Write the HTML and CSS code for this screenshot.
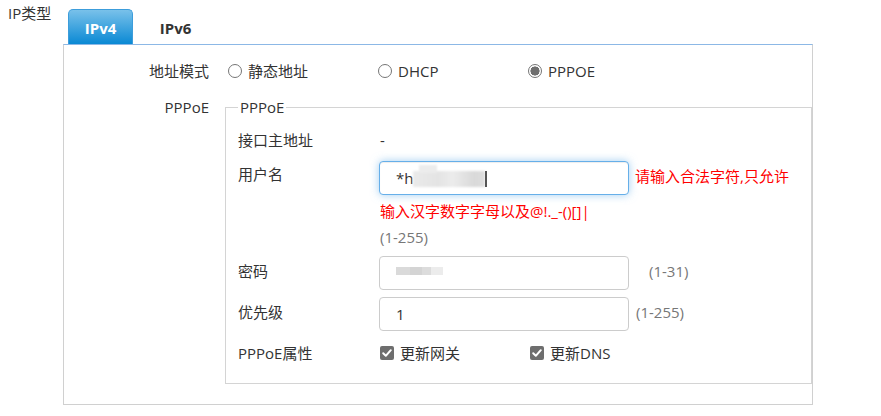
FILE: index.html
```html
<!DOCTYPE html>
<html lang="zh-CN">
<head>
<meta charset="utf-8">
<title>IP类型</title>
<link rel="stylesheet" href="styles.css">
</head>
<body>
<div class="page">
  <div class="ip-label">IP类型</div>
  <div class="ip-content">
    <div class="tabs">
      <div class="tab active">IPv4</div>
      <div class="tab">IPv6</div>
    </div>
    <div class="panel">
      <div class="form-grid">
        <div class="lbl">地址模式</div>
        <div class="radios">
          <label class="opt"><span class="radio"></span>静态地址</label>
          <label class="opt"><span class="radio"></span>DHCP</label>
          <label class="opt"><span class="radio checked"></span>PPPOE</label>
        </div>
        <div class="lbl">PPPoE</div>
        <fieldset class="group">
          <legend>PPPoE</legend>
          <div class="row r-addr">
            <div class="f-lbl">接口主地址</div>
            <div class="f-val">-</div>
          </div>
          <div class="row r-user">
            <div class="f-lbl">用户名</div>
            <div class="f-val"><span class="field"><input class="input focus" type="text" value="*h"><span class="redact"></span><span class="caret"></span></span><span class="error">请输入合法字符,只允许输入汉字数字字母以及@!._-()[]|</span>
              <div class="hint">(1-255)</div>
            </div>
          </div>
          <div class="row r-pass">
            <div class="f-lbl">密码</div>
            <div class="f-val inline"><span class="field"><input class="input" type="text" value=""><span class="pw-redact"></span></span><span class="hint hint-wide">(1-31)</span></div>
          </div>
          <div class="row r-prio">
            <div class="f-lbl">优先级</div>
            <div class="f-val inline"><span class="field"><input class="input" type="text" value="1"></span><span class="hint hint-near">(1-255)</span></div>
          </div>
          <div class="row r-attr">
            <div class="f-lbl">PPPoE属性</div>
            <div class="f-val checks">
              <label class="opt"><span class="check"><svg viewBox="0 0 14 14" width="14" height="14"><path d="M3.2 7.2 L5.8 9.8 L10.8 4.2" fill="none" stroke="#fff" stroke-width="2" stroke-linecap="round" stroke-linejoin="round"/></svg></span>更新网关</label>
              <label class="opt"><span class="check"><svg viewBox="0 0 14 14" width="14" height="14"><path d="M3.2 7.2 L5.8 9.8 L10.8 4.2" fill="none" stroke="#fff" stroke-width="2" stroke-linecap="round" stroke-linejoin="round"/></svg></span>更新DNS</label>
            </div>
          </div>
        </fieldset>
      </div>
    </div>
  </div>
</div>
</body>
</html>
```
FILE: styles.css
```css
html, body {
  margin: 0;
  background: #fff;
}
body {
  font-family: "Open Sans", "Noto Sans CJK SC", sans-serif;
  font-size: 15px;
  line-height: 20px;
  color: #333;
}
.page {
  display: flex;
  padding: 0 8px;
}
.ip-label {
  width: 55px;
  flex: none;
  padding-top: 3px;
}
.ip-content {
  width: 750px;
  flex: none;
}
.tabs {
  display: flex;
  gap: 10px;
  padding: 9px 0 0 5px;
}
.tab {
  width: 65px;
  height: 35px;
  box-sizing: border-box;
  padding-top: 3px;
  line-height: 32px;
  text-align: center;
  font-weight: 700;
  color: #333;
  border-radius: 5px 5px 0 0;
}
.tab.active {
  color: #fff;
  background: linear-gradient(#79c1ea, #0a89d4);
  border: 1px solid #3c9ddb;
  border-bottom: 0;
  padding-top: 2px;
}
.panel {
  border: 1px solid #d0d0d0;
  border-top-color: #8cb8e6;
  padding: 16px 0 20px;
}
.form-grid {
  display: grid;
  grid-template-columns: 161px 1fr;
  row-gap: 16px;
}
.lbl {
  text-align: right;
  padding-right: 16px;
}
.radios {
  display: flex;
  padding-left: 3px;
}
.opt {
  width: 150px;
  display: flex;
  align-items: center;
  gap: 6px;
}
.radio {
  width: 14px;
  height: 14px;
  box-sizing: border-box;
  border: 1px solid #767676;
  border-radius: 50%;
  background: #fff;
}
.radio.checked {
  background: radial-gradient(circle, #6f6f6f 0 4.3px, #fff 4.8px);
}
.group {
  margin: 0;
  min-width: 0;
  padding: 13px 12px 20px;
  border: 1px solid #d4d4d4;
}
.group legend {
  padding: 0 2px;
  line-height: 20px;
}
.row {
  display: flex;
}
.f-lbl {
  width: 142px;
  flex: none;
}
.f-val {
  flex: 1;
  min-width: 0;
}
.r-addr { margin-bottom: 10px; }
.r-user { margin-bottom: 9px; }
.r-user .f-lbl { padding-top: 4px; }
.r-pass { margin-bottom: 7px; }
.r-pass .f-lbl,
.r-prio .f-lbl { padding-top: 5px; }
.r-prio { margin-bottom: 12px; }
.field {
  position: relative;
  display: inline-block;
  vertical-align: middle;
  margin-left: -1px;
}
.input {
  display: block;
  width: 250px;
  height: 34px;
  box-sizing: border-box;
  margin: 0;
  padding: 0 16px;
  border: 1px solid #ccc;
  border-radius: 4px;
  font: inherit;
  color: #333;
  background: #fff;
  outline: none;
}
.input.focus {
  border-color: #66afe9;
  box-shadow: inset 0 1px 1px rgba(0,0,0,.075), 0 0 8px rgba(102,175,233,.6);
}
.redact {
  position: absolute;
  left: 34px;
  top: 10px;
  width: 72px;
  height: 16px;
  background: linear-gradient(90deg, #eaeaea, #e4e4e4 35%, #ececec 55%, #d9d9d9 85%, #dedede);
  filter: blur(1.2px);
}
.redact::before {
  content: "";
  position: absolute;
  left: 6px;
  top: -6px;
  width: 18px;
  height: 8px;
  background: #ececec;
}
.caret {
  position: absolute;
  left: 106px;
  top: 10px;
  width: 2px;
  height: 16px;
  background: #555;
}
.pw-redact {
  position: absolute;
  left: 17px;
  top: 11px;
  width: 47px;
  height: 8px;
  background: linear-gradient(90deg, #dadada 0 30%, #d4d4d4 30% 55%, #dcdcdc 55% 75%, #ececec 75%);
}
.error {
  color: #f00;
  line-height: 32px;
  margin-left: 6px;
}
.hint {
  color: #777;
}
.inline {
  display: flex;
  align-items: center;
}
.inline .hint {
  padding-bottom: 4px;
}
.hint-wide { margin-left: 20px; }
.hint-near { margin-left: 7px; }
.checks {
  display: flex;
}
.check {
  width: 14px;
  height: 14px;
  border-radius: 2px;
  background: #6e6e6e;
  display: flex;
}
```
